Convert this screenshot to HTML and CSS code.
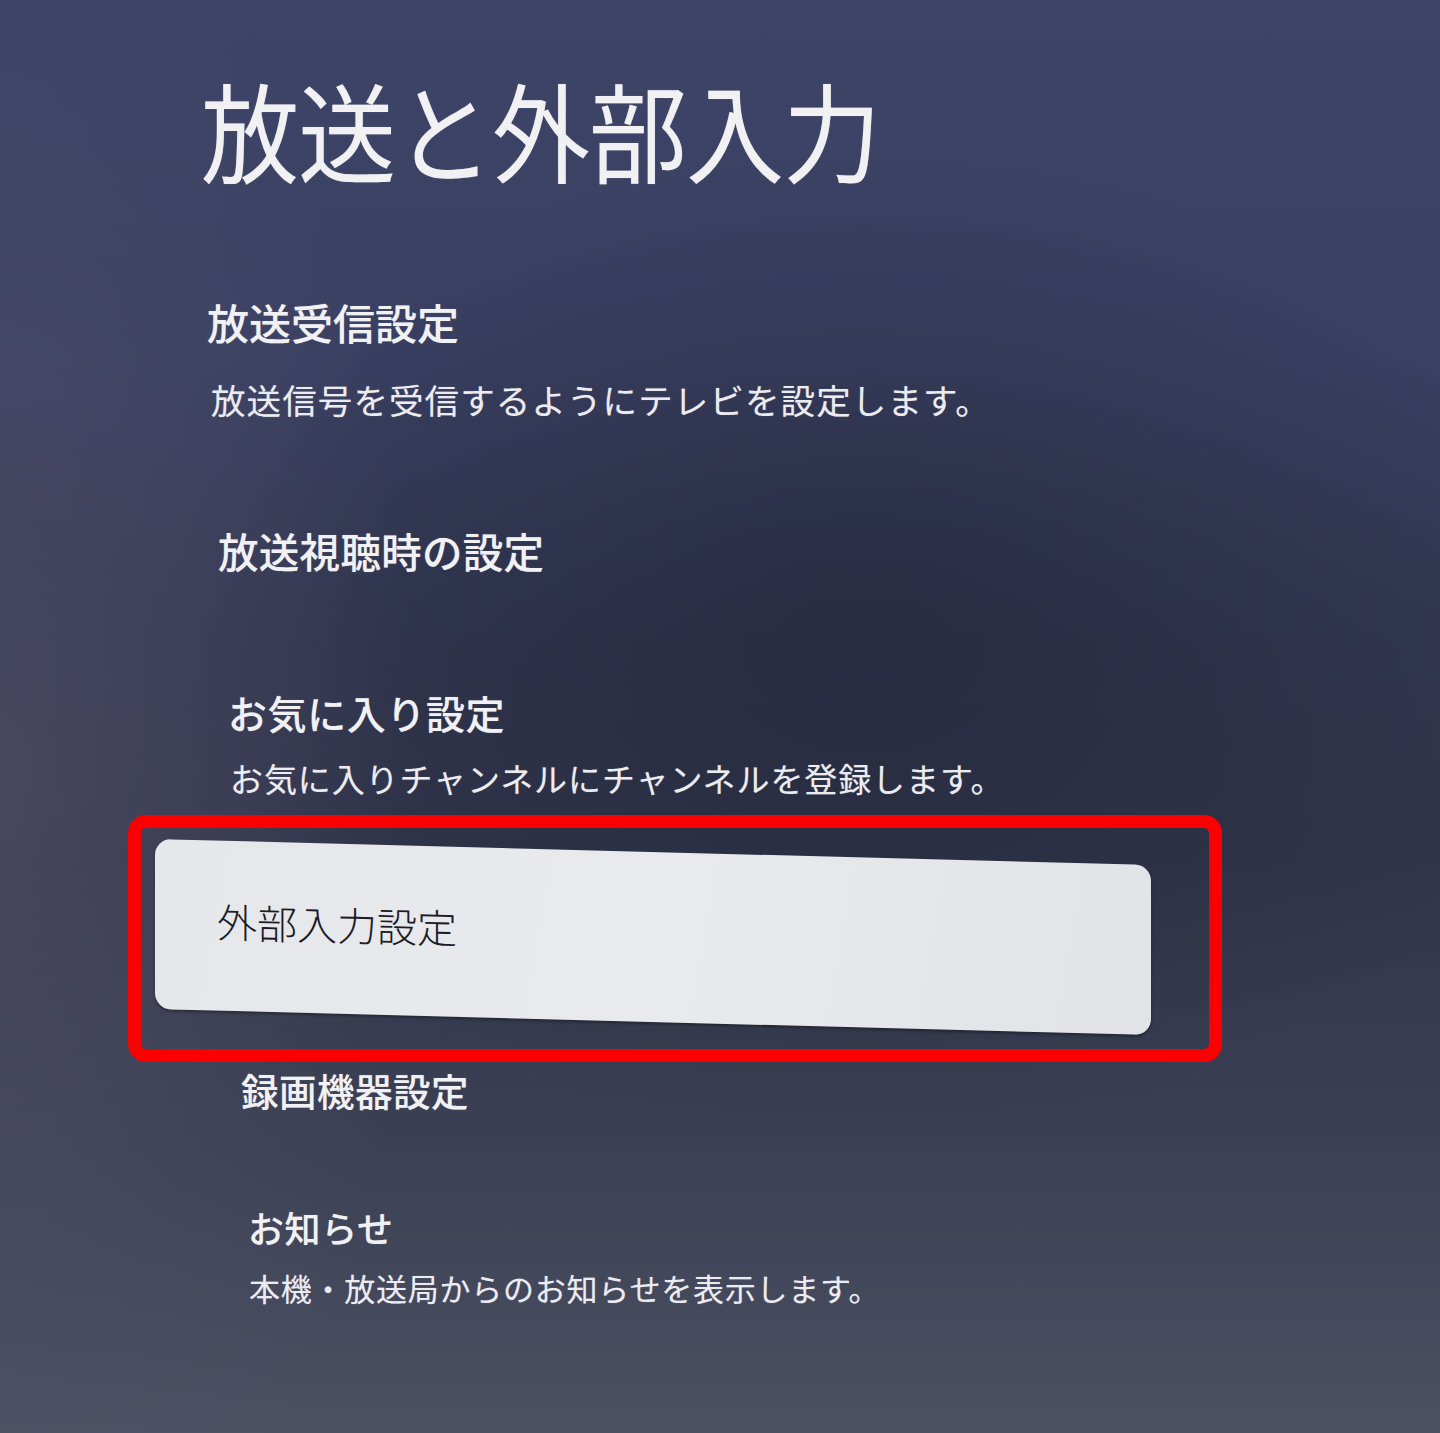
FILE: index.html
```html
<!DOCTYPE html>
<html lang="ja">
<head>
<meta charset="utf-8">
<title>放送と外部入力</title>
<link rel="stylesheet" href="styles.css">
</head>
<body>
<main class="screen">
  <h1 class="title">放送と外部入力</h1>
  <div class="item h1">放送受信設定</div>
  <div class="desc d1">放送信号を受信するようにテレビを設定します。</div>
  <div class="item h2">放送視聴時の設定</div>
  <div class="item h3">お気に入り設定</div>
  <div class="desc d3">お気に入りチャンネルにチャンネルを登録します。</div>
  <div class="highlight">
    <div class="card"><span class="card-label">外部入力設定</span></div>
  </div>
  <div class="item h4">録画機器設定</div>
  <div class="item h5">お知らせ</div>
  <div class="desc d5">本機・放送局からのお知らせを表示します。</div>
</main>
</body>
</html>
```
FILE: styles.css
```css
html, body {
  margin: 0;
  padding: 0;
}
body {
  width: 1440px;
  height: 1433px;
  overflow: hidden;
  font-family: "Noto Sans CJK JP", "Noto Sans", sans-serif;
  color: #f1f1f4;
  background-color: #353a54;
  background-image:
    radial-gradient(ellipse 420px 900px at 0% 55%, rgba(90, 86, 110, 0.55), rgba(90, 86, 110, 0) 100%),
    radial-gradient(ellipse 700px 500px at 60% 45%, rgba(30, 34, 52, 0.55), rgba(30, 34, 52, 0) 100%),
    linear-gradient(180deg, #3e4467 0%, #3a4062 25%, #323751 45%, #30354a 60%, #3b4054 80%, #4b5063 100%);
}
.screen {
  display: flex;
  flex-direction: column;
  align-items: flex-start;
  padding-top: 74px;
}
.title,
.item,
.desc {
  margin: 0;
  line-height: 1;
  white-space: nowrap;
  text-shadow: 0 0 1px rgba(255, 255, 255, 0.35);
}
.title {
  font-size: 98px;
  font-weight: 400;
  letter-spacing: -1px;
  margin-left: 201px;
  transform: scaleY(1.1);
  transform-origin: top left;
}
.item {
  font-weight: 500;
}
.desc {
  font-weight: 400;
  color: #ececf0;
}
.h1 { font-size: 42px; margin: 129px 0 0 207px; }
.d1 { font-size: 34.5px; letter-spacing: 1.1px; margin: 39px 0 0 211px; }
.h2 { font-size: 40.5px; letter-spacing: 0.3px; margin: 114px 0 0 218px; }
.h3 { font-size: 39px; letter-spacing: 0.6px; margin: 122px 0 0 228px; }
.d3 { font-size: 33px; letter-spacing: 0.9px; margin: 30px 0 0 230px; }
.h4 { font-size: 37.5px; letter-spacing: 0.5px; margin: 9px 0 0 241px; }
.h5 { font-size: 36px; letter-spacing: 0.6px; margin: 100px 0 0 248px; }
.d5 { font-size: 31px; letter-spacing: 0.75px; margin: 27px 0 0 249px; }

.highlight {
  margin: 20px 0 0 128px;
  width: 1094px;
  height: 247px;
  box-sizing: border-box;
  border: 13px solid #fb0000;
  border-radius: 18px;
  padding: 24px 0 0 14px;
}
.card {
  width: 996px;
  height: 170px;
  box-sizing: border-box;
  border-radius: 16px;
  background: linear-gradient(100deg, #e6e7ea 0%, #e9eaed 50%, #e2e3e6 100%);
  box-shadow: 0 2px 3px rgba(0, 0, 0, 0.35);
  transform: skewY(1.5deg);
  display: flex;
  align-items: center;
  padding: 0 0 10px 62px;
}
.card-label {
  font-size: 40px;
  line-height: 1;
  font-weight: 300;
  color: #1c1c26;
}
```
